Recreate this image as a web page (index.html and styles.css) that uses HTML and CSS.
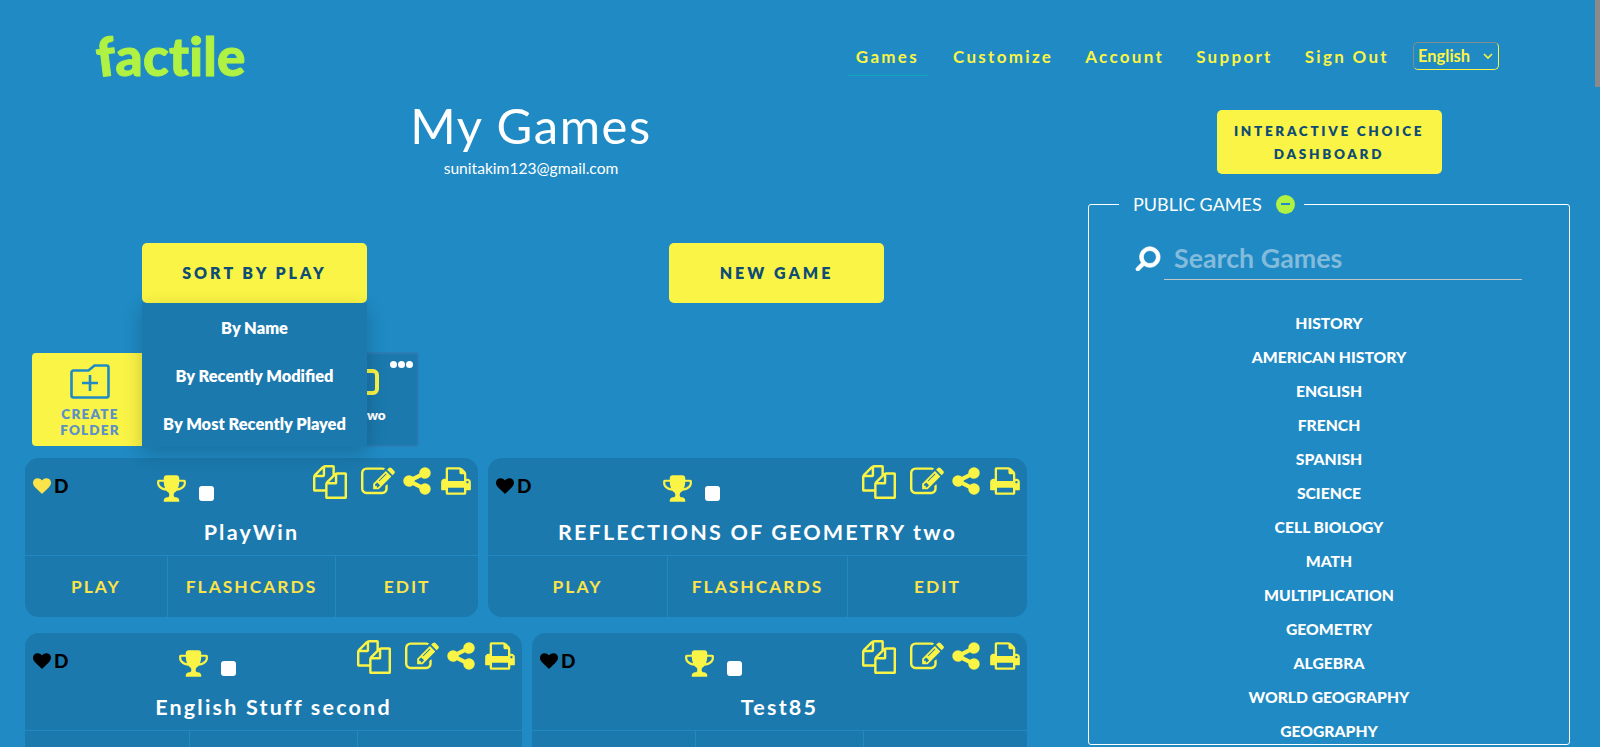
FILE: index.html
```html
<!DOCTYPE html>
<html lang="en">
<head>
  <meta charset="UTF-8" />
  <meta name="viewport" content="width=device-width, initial-scale=1.0" />
  <title>My Games - Factile</title>
  <link rel="stylesheet" href="styles.css">
</head>
<body>
  <svg class="sprites" aria-hidden="true">
    <symbol id="i-heart" viewBox="0 0 1792 1792"><path d="M896 1664q-26 0-44-18l-624-602q-10-8-27.5-26t-55.5-65.5-68-97.5-53.5-121-23.5-138q0-220 127-344t351-124q62 0 126.5 21.5t120 58 95.5 68.5 76 68q36-36 76-68t95.5-68.5 120-58 126.5-21.5q224 0 351 124t127 344q0 221-229 450l-623 600q-18 18-44 18z"/></symbol>
    <symbol id="i-trophy" viewBox="0 0 1792 1792"><path d="M522 883q-74-162-74-371h-256v96q0 78 94.5 162t235.5 113zm1078-275v-96h-256q0 209-74 371 141-29 235.5-113t94.5-162zm128-128v128q0 71-41.5 143t-112 130-173 97.5-215.5 44.5q-42 54-95 95-38 34-52.5 72.5t-14.5 89.5q0 54 30.5 91t97.5 37q75 0 133.5 45.5t58.5 114.5v64q0 14-9 23t-23 9h-832q-14 0-23-9t-9-23v-64q0-69 58.5-114.5t133.5-45.5q67 0 97.5-37t30.5-91q0-51-14.5-89.5t-52.5-72.5q-53-41-95-95-113-5-215.5-44.5t-173-97.5-112-130-41.5-143v-128q0-40 28-68t68-28h288v-96q0-66 47-113t113-47h576q66 0 113 47t47 113v96h288q40 0 68 28t28 68z"/></symbol>
    <symbol id="i-copy" viewBox="0 0 1792 1792"><path d="M1696 384q40 0 68 28t28 68v1216q0 40-28 68t-68 28h-960q-40 0-68-28t-28-68v-288h-544q-40 0-68-28t-28-68v-672q0-40 20-88t48-76l408-408q28-28 76-48t88-20h416q40 0 68 28t28 68v328q68-40 128-40h416zm-544 213l-299 299h299v-299zm-640-384l-299 299h299v-299zm196 647l316-316v-416h-384v416q0 40-28 68t-68 28h-416v640h512v-256q0-40 20-88t48-76zm956 804v-1152h-384v416q0 40-28 68t-68 28h-416v640h896z"/></symbol>
    <symbol id="i-edit" viewBox="0 0 1792 1792"><path d="M888 1184l116-116-152-152-116 116v56h96v96h56zm440-720q-16-16-33 1l-350 350q-17 17-1 33t33-1l350-350q17-17 1-33zm80 594v190q0 119-84.5 203.5t-203.5 84.5h-832q-119 0-203.5-84.5t-84.5-203.5v-832q0-119 84.5-203.5t203.5-84.5h832q63 0 117 25 15 7 18 23 3 17-9 29l-49 49q-14 14-32 8-23-6-45-6h-832q-66 0-113 47t-47 113v832q0 66 47 113t113 47h832q66 0 113-47t47-113v-126q0-13 9-22l64-64q15-15 35-7t20 29zm-96-738l288 288-672 672h-288v-288zm444 132l-92 92-288-288 92-92q28-28 68-28t68 28l152 152q28 28 28 68t-28 68z"/></symbol>
    <symbol id="i-share" viewBox="0 0 1792 1792"><path d="M1344 1024q133 0 226.5 93.5t93.5 226.5-93.5 226.5-226.5 93.5-226.5-93.5-93.5-226.5q0-12 2-34l-360-180q-92 86-218 86-133 0-226.5-93.5t-93.5-226.5 93.5-226.5 226.5-93.5q126 0 218 86l360-180q-2-22-2-34 0-133 93.5-226.5t226.5-93.5 226.5 93.5 93.5 226.5-93.5 226.5-226.5 93.5q-126 0-218-86l-360 180q2 22 2 34t-2 34l360 180q92-86 218-86z"/></symbol>
    <symbol id="i-print" viewBox="0 0 1792 1792"><path d="M448 1536h896v-256h-896v256zm0-640h896v-384h-160q-40 0-68-28t-28-68v-160h-640v640zm1152 64q0-26-19-45t-45-19-45 19-19 45 19 45 45 19 45-19 19-45zm128 0v416q0 13-9.5 22.5t-22.5 9.5h-224v160q0 40-28 68t-68 28h-960q-40 0-68-28t-28-68v-160h-224q-13 0-22.5-9.5t-9.5-22.5v-416q0-79 56.5-135.5t135.5-56.5h64v-544q0-40 28-68t68-28h672q40 0 88 20t76 48l152 152q28 28 48 76t20 88v256h64q79 0 135.5 56.5t56.5 135.5z"/></symbol>
  </svg>

  <header class="topbar">
    <a class="logo"><span class="logo-f">f</span>actile</a>
    <nav class="nav">
      <a class="nav-link active">Games</a>
      <a class="nav-link">Customize</a>
      <a class="nav-link">Account</a>
      <a class="nav-link">Support</a>
      <a class="nav-link">Sign Out</a>
      <select class="lang"><option>English</option></select>
    </nav>
  </header>

  <main class="page">
    <section class="games">
      <h1 class="title">My Games</h1>
      <p class="email">sunitakim123@gmail.com</p>

      <div class="actions-row">
        <div class="sort">
          <button class="btn btn-sort">SORT BY PLAY</button>
          <ul class="sort-menu">
            <li>By Name</li>
            <li>By Recently Modified</li>
            <li>By Most Recently Played</li>
          </ul>
        </div>
        <button class="btn btn-new">NEW GAME</button>
      </div>

      <div class="folders">
        <div class="folder folder-create">
          <svg class="folder-icon" viewBox="0 0 40 35"><path d="M1.5 8.5a2 2 0 0 1 2-2h15l6-5h12a2 2 0 0 1 2 2v28a2 2 0 0 1-2 2h-33a2 2 0 0 1-2-2z" fill="none" stroke="#1f8ac3" stroke-width="2.6"/><path d="M20 11v16M12 19h16" fill="none" stroke="#1f8ac3" stroke-width="2.6"/></svg>
          <span class="folder-name">CREATE<br>FOLDER</span>
        </div>
        <div class="folder folder-item">
          <span class="folder-dots"><i></i><i></i><i></i></span>
          <svg class="folder-icon" viewBox="0 0 40 26"><rect x="2" y="2" width="36" height="22" rx="4" fill="none" stroke="#faf446" stroke-width="4"/></svg>
          <span class="folder-name">Unit two</span>
        </div>
      </div>

      <div class="cards">
        <article class="card card-a">
          <div class="card-top">
            <div class="fav"><svg class="i-heart on"><use href="#i-heart"/></svg><b>D</b></div>
            <div class="badge"><svg class="i-trophy"><use href="#i-trophy"/></svg><span class="check"></span></div>
            <div class="tools">
              <svg class="i-copy"><use href="#i-copy"/></svg>
              <svg class="i-edit"><use href="#i-edit"/></svg>
              <svg class="i-share"><use href="#i-share"/></svg>
              <svg class="i-print"><use href="#i-print"/></svg>
            </div>
          </div>
          <h2 class="card-name">PlayWin</h2>
          <div class="card-links"><a>PLAY</a><a>FLASHCARDS</a><a>EDIT</a></div>
        </article>

        <article class="card card-b">
          <div class="card-top">
            <div class="fav"><svg class="i-heart"><use href="#i-heart"/></svg><b>D</b></div>
            <div class="badge"><svg class="i-trophy"><use href="#i-trophy"/></svg><span class="check"></span></div>
            <div class="tools">
              <svg class="i-copy"><use href="#i-copy"/></svg>
              <svg class="i-edit"><use href="#i-edit"/></svg>
              <svg class="i-share"><use href="#i-share"/></svg>
              <svg class="i-print"><use href="#i-print"/></svg>
            </div>
          </div>
          <h2 class="card-name">REFLECTIONS OF GEOMETRY two</h2>
          <div class="card-links"><a>PLAY</a><a>FLASHCARDS</a><a>EDIT</a></div>
        </article>

        <article class="card card-c">
          <div class="card-top">
            <div class="fav"><svg class="i-heart"><use href="#i-heart"/></svg><b>D</b></div>
            <div class="badge"><svg class="i-trophy"><use href="#i-trophy"/></svg><span class="check"></span></div>
            <div class="tools">
              <svg class="i-copy"><use href="#i-copy"/></svg>
              <svg class="i-edit"><use href="#i-edit"/></svg>
              <svg class="i-share"><use href="#i-share"/></svg>
              <svg class="i-print"><use href="#i-print"/></svg>
            </div>
          </div>
          <h2 class="card-name">English Stuff second</h2>
          <div class="card-links"><a>PLAY</a><a>FLASHCARDS</a><a>EDIT</a></div>
        </article>

        <article class="card card-d">
          <div class="card-top">
            <div class="fav"><svg class="i-heart"><use href="#i-heart"/></svg><b>D</b></div>
            <div class="badge"><svg class="i-trophy"><use href="#i-trophy"/></svg><span class="check"></span></div>
            <div class="tools">
              <svg class="i-copy"><use href="#i-copy"/></svg>
              <svg class="i-edit"><use href="#i-edit"/></svg>
              <svg class="i-share"><use href="#i-share"/></svg>
              <svg class="i-print"><use href="#i-print"/></svg>
            </div>
          </div>
          <h2 class="card-name">Test85</h2>
          <div class="card-links"><a>PLAY</a><a>FLASHCARDS</a><a>EDIT</a></div>
        </article>
      </div>
    </section>

    <aside class="side">
      <button class="btn btn-dash">INTERACTIVE CHOICE<br>DASHBOARD</button>
      <fieldset class="public">
        <legend class="public-title">PUBLIC GAMES <span class="minus"></span></legend>
        <div class="search">
          <svg class="i-search" viewBox="0 0 1792 1792"><path d="M1216 832q0-185-131.5-316.5t-316.5-131.5-316.5 131.5-131.5 316.5 131.5 316.5 316.5 131.5 316.5-131.5 131.5-316.5zm512 832q0 52-38 90t-90 38q-54 0-90-38l-343-342q-179 124-399 124-143 0-273.5-55.5t-225-150-150-225-55.5-273.5 55.5-273.5 150-225 225-150 273.5-55.5 273.5 55.5 225 150 150 225 55.5 273.5q0 220-124 399l343 343q37 37 37 90z"/></svg>
          <input class="search-input" type="text" placeholder="Search Games">
        </div>
        <ul class="topics">
          <li>HISTORY</li>
          <li>AMERICAN HISTORY</li>
          <li>ENGLISH</li>
          <li>FRENCH</li>
          <li>SPANISH</li>
          <li>SCIENCE</li>
          <li>CELL BIOLOGY</li>
          <li>MATH</li>
          <li>MULTIPLICATION</li>
          <li>GEOMETRY</li>
          <li>ALGEBRA</li>
          <li>WORLD GEOGRAPHY</li>
          <li>GEOGRAPHY</li>
        </ul>
      </fieldset>
    </aside>
  </main>

  <div class="scroll-thumb"></div>
</body>
</html>
```

FILE: styles.css
```css
html, body {
  height: 747px;
  overflow: hidden;
}

body {
  margin: 0;
  background: #1f8ac3;
  color: #fff;
  font-family: Lato, "Liberation Sans", sans-serif;
}

.sprites {
  display: none;
}

ul {
  list-style: none;
  margin: 0;
  padding: 0;
}

.topbar {
  display: flex;
  justify-content: space-between;
  height: 100px;
  padding: 0 101px 0 96px;
}

.logo {
  height: 78px;
  margin-top: 22px;
  color: #b0f243;
  font-size: 53px;
  font-weight: 900;
  letter-spacing: 0.3px;
  line-height: 68px;
  -webkit-text-stroke: 1px #b0f243;
}

.logo-f {
  display: inline-block;
  transform: rotate(-7deg);
}

.nav {
  display: flex;
  align-items: flex-start;
  margin-top: 42px;
}

.nav-link {
  height: 34px;
  padding: 4px 9px 0;
  margin-right: 14px;
  color: #faf446;
  font-size: 17px;
  font-weight: 700;
  letter-spacing: 2.3px;
  line-height: 22px;
  box-sizing: border-box;
}

.nav-link:nth-child(5) {
  margin-right: 15px;
}

.nav-link.active {
  margin-right: 15px;
  padding-right: 10px;
  border-bottom: 1px solid #12a5b8;
}

.lang {
  width: 86px;
  height: 28px;
  padding: 0 0 0 4px;
  appearance: none;
  background: url("data:image/svg+xml,%3Csvg xmlns='http://www.w3.org/2000/svg' width='10' height='7'%3E%3Cpath d='M1 1l4 4 4-4' fill='none' stroke='%23faf446' stroke-width='1.6'/%3E%3C/svg%3E") no-repeat right 5px top 10px;
  border: 1px solid;
  border-color: #808f8f #faf446 #faf446 #808f8f;
  border-radius: 5px;
  color: #faf446;
  font-family: Lato, sans-serif;
  font-size: 16.5px;
  font-weight: 700;
}

.page {
  display: flex;
}

.games {
  width: 1062px;
  flex: none;
}

.title {
  margin: 0;
  font-size: 49px;
  font-weight: 400;
  line-height: 50px;
  letter-spacing: 1.6px;
  text-align: center;
}

.email {
  margin: 8px 0 0;
  font-size: 15.6px;
  line-height: 20px;
  text-align: center;
}

.btn {
  padding: 0 0 2px;
  border: 0;
  border-radius: 5px;
  background: #faf446;
  color: #0f4c75;
  font-family: inherit;
  font-weight: 800;
  letter-spacing: 3px;
}

.actions-row {
  display: flex;
  gap: 302px;
  margin: 65px 0 0 142px;
}

.sort {
  position: relative;
}

.btn-sort {
  width: 225px;
  height: 60px;
  font-size: 16px;
}

.btn-new {
  width: 215px;
  height: 60px;
  font-size: 16px;
}

.sort-menu {
  position: absolute;
  top: 60px;
  left: 0;
  z-index: 2;
  width: 225px;
  height: 144px;
  background: #1b79ad;
  box-shadow: 0 6px 18px rgba(0, 0, 0, 0.2);
  font-size: 16.4px;
  font-weight: 800;
  text-align: center;
}

.sort-menu li {
  height: 48px;
  line-height: 50px;
}

.folders {
  display: flex;
  gap: 151px;
  height: 94px;
  margin: 50px 0 0 32px;
}

.folder {
  position: relative;
  display: flex;
  flex-direction: column;
  align-items: center;
  border-radius: 4px;
  box-sizing: border-box;
  font-size: 13.5px;
  font-weight: 800;
  text-align: center;
}

.folder-create {
  width: 116px;
  height: 93px;
  padding-top: 11px;
  background: #faf446;
  color: #5b90c8;
  letter-spacing: 1.2px;
  line-height: 16px;
}

.folder-create .folder-icon {
  margin-bottom: 7px;
}

.folder-item {
  width: 120px;
  height: 95px;
  padding-top: 15px;
  margin-top: -1px;
  background: #1b79ad;
  border: 2px solid #2a7db4;
}

.folder-icon {
  width: 40px;
  height: 35px;
}

.folder-item .folder-icon {
  height: 26px;
  margin-bottom: 12px;
}

.folder-dots {
  position: absolute;
  top: 7px;
  right: 4px;
  display: flex;
  gap: 1px;
}

.folder-dots i {
  width: 7px;
  height: 7px;
  border-radius: 50%;
  background: #fff;
}

.cards {
  display: flex;
  flex-wrap: wrap;
  gap: 16px 10px;
  margin: 11px 0 0 25px;
  width: 1002px;
}

.card {
  height: 159px;
  border-radius: 14px;
  background: #1b79ad;
}

.card-a { width: 453px; }
.card-b { width: 539px; }
.card-c { width: 497px; }
.card-d { width: 495px; }

.card-top {
  display: flex;
  height: 54px;
}

.fav {
  display: flex;
  align-items: flex-start;
  width: 47px;
  padding: 19px 0 0 8px;
  color: #000;
  font-size: 19px;
  font-weight: 900;
  line-height: 20px;
}

.fav b {
  margin-top: -1px;
}

.fav svg {
  width: 18px;
  height: 18px;
  margin-right: 3px;
  fill: #000;
}

.fav svg.on {
  fill: #fbe34a;
}

.badge {
  display: flex;
  flex: 1;
  justify-content: center;
  gap: 12px;
  padding-top: 15px;
}

.i-trophy {
  width: 31px;
  height: 31px;
  fill: #faf446;
}

.check {
  width: 15px;
  height: 15px;
  margin-top: 13px;
  border-radius: 3px;
  background: #fff;
}

.tools {
  display: flex;
  align-items: flex-start;
  justify-content: flex-end;
  width: 189px;
  padding: 7px 6px 0 0;
  box-sizing: border-box;
  fill: #faf446;
}

.i-copy { width: 34px; height: 34px; margin-right: 14px; }
.i-edit { width: 34px; height: 34px; margin-right: 6px; }
.i-share { width: 32px; height: 32px; margin-right: 7px; }
.i-print { width: 32px; height: 32px; }

.card-name {
  height: 43px;
  margin: 0;
  font-size: 21.5px;
  font-weight: 700;
  letter-spacing: 2.2px;
  line-height: 41px;
  text-align: center;
}

.card-links {
  display: flex;
  height: 62px;
  border-top: 1px solid #2189c2;
}

.card-links a {
  flex: 1 1 0;
  padding: 0 18px;
  color: #fbe34a;
  font-size: 17.4px;
  font-weight: 700;
  letter-spacing: 2px;
  line-height: 62px;
  text-align: center;
  white-space: nowrap;
}

.card-links a + a {
  border-left: 1px solid #2189c2;
}

.side {
  display: flex;
  flex-direction: column;
  align-items: center;
  width: 482px;
  margin-left: 26px;
  flex: none;
}

.btn-dash {
  width: 225px;
  height: 64px;
  margin-top: 10px;
  padding: 2px 0 0;
  font-size: 13.5px;
  letter-spacing: 2.7px;
  line-height: 23px;
}

.public {
  width: 482px;
  height: 552px;
  min-width: 0;
  margin: 19px 0 0;
  padding: 0;
  border: 1px solid #fff;
  border-radius: 3px;
  box-sizing: border-box;
  overflow: hidden;
}

.public-title {
  display: flex;
  align-items: center;
  gap: 14px;
  margin-left: 30px;
  padding: 0 9px 0 14px;
  font-size: 18px;
}

.minus {
  position: relative;
  width: 19px;
  height: 19px;
  border-radius: 50%;
  background: #b0f243;
}

.minus::after {
  content: "";
  position: absolute;
  top: 8px;
  left: 5px;
  width: 9px;
  height: 2px;
  background: #1f8ac3;
}

.search {
  display: flex;
  align-items: flex-start;
  margin: 18px 47px 0 46px;
}

.i-search {
  width: 26px;
  height: 26px;
  margin: 12px 3px 0 0;
  fill: #fff;
  stroke: #fff;
  stroke-width: 50;
  transform: scaleX(-1);
}

.search-input {
  flex: 1;
  min-width: 0;
  height: 47px;
  padding: 3px 0 0 10px;
  border: 0;
  border-bottom: 1px solid #c3c6c8;
  outline: 0;
  background: transparent;
  box-sizing: border-box;
  color: #fff;
  font-family: inherit;
  font-size: 26.8px;
  font-weight: 700;
}

.search-input::placeholder {
  color: #82bbdc;
  opacity: 1;
}

.topics {
  margin-top: 26px;
  text-align: center;
  font-size: 15.7px;
  font-weight: 900;
}

.topics li {
  height: 34px;
  line-height: 34px;
}

.scroll-thumb {
  position: absolute;
  top: 0;
  right: 0;
  width: 5px;
  height: 87px;
  background: #8a8a8a;
}
```
